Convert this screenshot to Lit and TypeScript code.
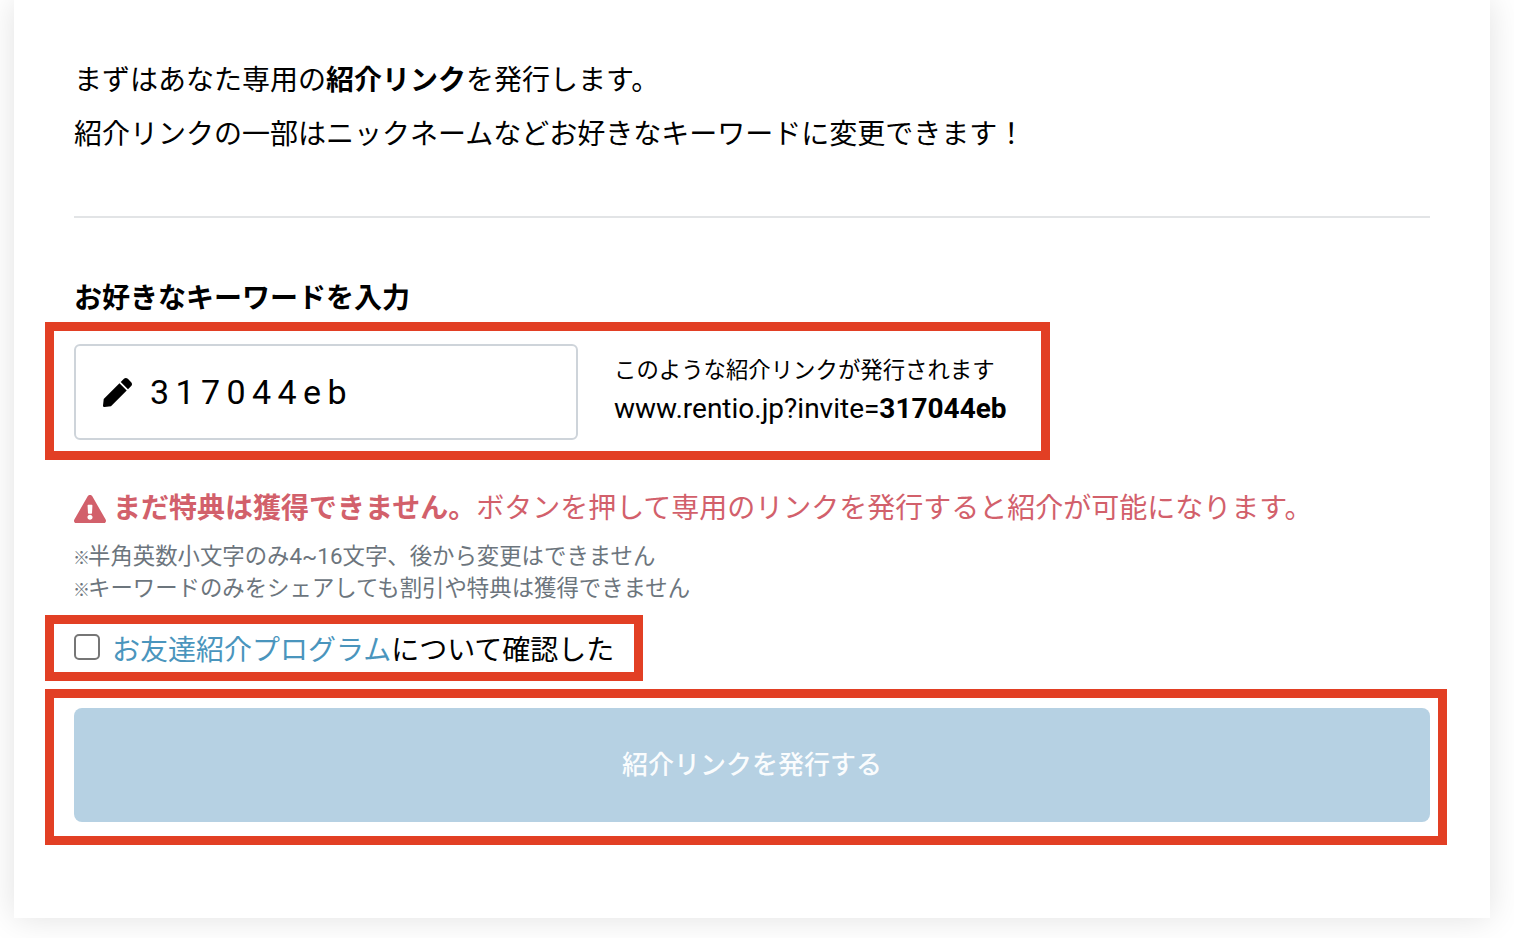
import { LitElement, html, css } from "lit";
import { customElement } from "lit/decorators.js";

@customElement("app-root")
export class AppRoot extends LitElement {
  static styles = css`
    :host {
      display: block;
      height: 938px;
      overflow: hidden;
      background: #fff;
      font-family: Roboto, "Noto Sans CJK JP", sans-serif;
      color: #000;
    }
    .card {
      box-sizing: border-box;
      width: 1476px;
      height: 918px;
      margin-left: 14px;
      padding: 54px 60px 0;
      background: #fff;
      box-shadow: 0 0 32px rgba(0, 0, 0, 0.12);
    }
    p { margin: 0; }
    .intro p { font-size: 28px; line-height: 54px; height: 54px; }
    hr { border: 0; height: 2px; background: #e2e4e6; margin: 54px 0 0; }
    .title { font-size: 28px; font-weight: 700; line-height: 40px; height: 40px; margin-top: 61px; }
    .marked { position: relative; }
    .mark { position: absolute; border: 9.5px solid #e23f24; pointer-events: none; }
    .keyrow { display: flex; align-items: center; width: 936px; height: 96px; margin-top: 25px; }
    .mark-key { left: -29px; top: -22px; right: -40px; bottom: -20px; }
    .field {
      box-sizing: border-box; width: 504px; height: 96px; display: flex; align-items: center; gap: 18px;
      padding-left: 27px; border: 2px solid #ced4da; border-radius: 6px; flex: none;
    }
    .field svg { width: 29px; height: 29px; flex: none; display: block; }
    .field input {
      border: 0; outline: 0; padding: 0; background: none; flex: 1; min-width: 0;
      font: 400 34px Roboto, sans-serif; letter-spacing: 6.4px; color: #000;
    }
    .preview { margin-left: 36px; margin-top: -4px; white-space: nowrap; }
    .preview .a { font-size: 22.4px; line-height: 36px; height: 36px; }
    .preview .b { font-size: 28px; line-height: 42px; height: 40px; }
    .warn { display: flex; align-items: center; gap: 7px; height: 40px; margin-top: 49px; font-size: 28px; line-height: 40px; color: #d2606b; white-space: nowrap; }
    .warn svg { width: 32px; height: 28.5px; flex: none; display: block; }
    .notes { margin-top: 11px; font-size: 22.4px; color: #6c757d; white-space: nowrap; }
    .notes p { line-height: 32px; height: 32px; }
    .kome { display: inline-block; width: 14px; margin-left: -1px; margin-right: 1px; font-size: 17px; font-weight: 700; line-height: 1; }
    .check { display: flex; align-items: center; gap: 12px; width: 540px; height: 40px; margin-top: 24px; font-size: 28px; white-space: nowrap; }
    .check input { appearance: none; box-sizing: border-box; width: 26px; height: 26px; margin: -2px 0 0; border: 2px solid #767676; border-radius: 5px; background: #fff; flex: none; }
    .check a { color: #4a95bd; text-decoration: none; }
    .mark-check { left: -29px; top: -13px; right: -29px; bottom: -13px; }
    .cta { margin-top: 40px; }
    .cta button {
      display: block; width: 100%; height: 114px; border: 0; border-radius: 8px; background: #b6d1e3; color: rgba(255,255,255,.95);
      font-family: inherit; font-size: 26px; font-weight: 500; padding: 0 0 6px;
    }
    .mark-cta { left: -29px; top: -19px; right: -17px; bottom: -23px; }
  `;

  render() {
    return html`
      <div class="card">
        <div class="intro">
          <p>まずはあなた専用の<b>紹介リンク</b>を発行します。</p>
          <p>紹介リンクの一部はニックネームなどお好きなキーワードに変更できます！</p>
        </div>
        <hr />
        <p class="title">お好きなキーワードを入力</p>
        <div class="keyrow marked">
          <label class="field">
            <svg viewBox="0 0 512 512" aria-hidden="true"><path fill="#000" d="M290.74 93.24l128.02 128.02-277.99 277.99-114.14 12.6C11.35 513.54-1.56 500.62.14 485.34l12.7-114.22 277.9-278.88zm207.2-19.06l-60.11-60.11c-18.75-18.75-49.16-18.75-67.91 0l-56.55 56.55 128.02 128.02 56.55-56.55c18.75-18.76 18.75-49.16 0-67.91z"/></svg>
            <input type="text" .value=${"317044eb"} />
          </label>
          <div class="preview">
            <p class="a">このような紹介リンクが発行されます</p>
            <p class="b">www.rentio.jp?invite=<b>317044eb</b></p>
          </div>
          <div class="mark mark-key"></div>
        </div>
        <p class="warn">
          <svg viewBox="0 0 576 512" aria-hidden="true"><path fill="#d2606b" d="M569.517 440.013C587.975 472.007 564.806 512 527.94 512H48.054c-36.937 0-59.999-40.055-41.577-71.987L246.423 24.035c18.467-32.009 64.72-31.951 83.154 0l239.94 416.978zM288 354c-25.405 0-46 20.595-46 46s20.595 46 46 46 46-20.595 46-46-20.595-46-46-46zm-43.673-165.346l7.418 136c.347 6.364 5.609 11.346 11.982 11.346h48.546c6.373 0 11.635-4.982 11.982-11.346l7.418-136c.375-6.874-5.098-12.654-11.982-12.654h-63.383c-6.884 0-12.356 5.78-11.981 12.654z"/></svg>
          <span><b>まだ特典は獲得できません。</b>ボタンを押して専用のリンクを発行すると紹介が可能になります。</span>
        </p>
        <div class="notes">
          <p><span class="kome">※</span>半角英数小文字のみ4~16文字、後から変更はできません</p>
          <p><span class="kome">※</span>キーワードのみをシェアしても割引や特典は獲得できません</p>
        </div>
        <div class="check marked">
          <input type="checkbox" />
          <span><a href="#">お友達紹介プログラム</a>について確認した</span>
          <div class="mark mark-check"></div>
        </div>
        <div class="cta marked">
          <button type="button">紹介リンクを発行する</button>
          <div class="mark mark-cta"></div>
        </div>
      </div>
    `;
  }
}
